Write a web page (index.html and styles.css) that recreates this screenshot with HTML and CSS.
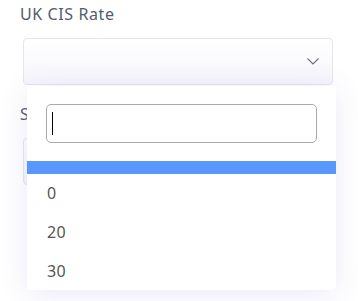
FILE: index.html
```html
<!DOCTYPE html>
<html>
<head>
  <meta charset="UTF-8">
  <title>UK CIS Rate</title>
  <link rel="stylesheet" href="styles.css">
</head>
<body>
  <div class="form">
    <div class="form-group">
      <label class="label">UK CIS Rate</label>
      <div class="select">
        <svg class="chevron" width="12" height="7" viewBox="0 0 12 7">
          <path d="M0.5 0.5 L6 6 L11.5 0.5" fill="none" stroke="#6b6f82" stroke-width="1.1"/>
        </svg>
      </div>
    </div>
    <div class="form-group second">
      <label class="label">Status</label>
      <div class="select"></div>
    </div>

    <div class="dropdown">
      <div class="search-wrap">
        <div class="search"><span class="caret"></span></div>
      </div>
      <ul class="options">
        <li class="option highlighted"></li>
        <li class="option">0</li>
        <li class="option">20</li>
        <li class="option">30</li>
      </ul>
    </div>
  </div>
</body>
</html>
```

FILE: styles.css
```css
body {
  margin: 0;
  background: #fff;
  font-family: "Noto Sans", "Open Sans", sans-serif;
}

.form {
  position: relative;
  min-height: 301px;
  padding-top: 2px;
  box-sizing: border-box;
}

.form-group {
  padding-left: 20px;
}

.label {
  display: block;
  font-size: 16px;
  line-height: 24px;
  letter-spacing: 0.6px;
  color: #555a6e;
  margin-bottom: 12px;
}

.select {
  position: relative;
  width: 308px;
  height: 45px;
  margin-left: 3px;
  border: 1px solid #e6e4ef;
  border-radius: 4px;
  background: linear-gradient(#fff, #f6f5fc);
}

.chevron {
  position: absolute;
  right: 13px;
  top: 19px;
}

.second {
  margin-top: 17px;
}

.dropdown {
  position: absolute;
  left: 27px;
  top: 86px;
  width: 309px;
  height: 204px;
  background: #fff;
  border-radius: 0 0 4px 4px;
  box-shadow: 0 4px 30px rgba(90, 70, 190, 0.12);
  overflow: hidden;
}

.search-wrap {
  padding: 18px 19px;
}

.search {
  height: 37px;
  border: 1px solid #aaa;
  border-radius: 5px;
  display: flex;
  align-items: center;
  padding-left: 5px;
}

.caret {
  width: 1px;
  height: 23px;
  background: #000;
}

.options {
  list-style: none;
  margin: 0;
  padding: 0;
}

.option {
  height: 39px;
  line-height: 39px;
  padding-left: 20px;
  font-size: 16px;
  letter-spacing: 0.4px;
  color: #555;
}

.option.highlighted {
  height: 13px;
  background: #5897fb;
}
```
